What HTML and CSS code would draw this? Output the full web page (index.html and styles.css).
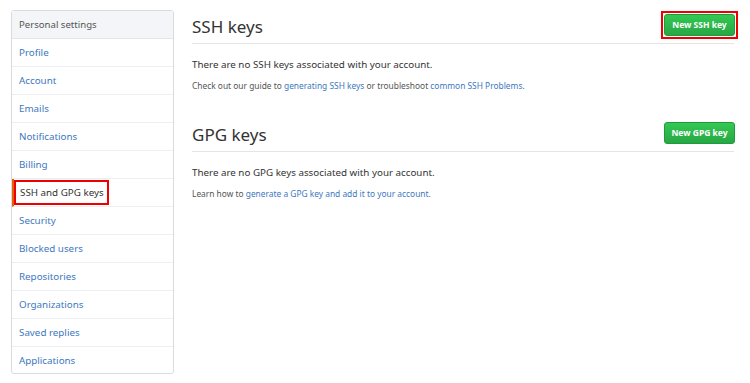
FILE: index.html
```html
<!DOCTYPE html>
<html>
<head>
<meta charset="utf-8">
<link rel="stylesheet" href="styles.css">
</head>
<body>
<div class="page">
  <nav class="menu">
    <div class="menu-head">Personal settings</div>
    <a class="menu-item">Profile</a>
    <a class="menu-item">Account</a>
    <a class="menu-item">Emails</a>
    <a class="menu-item">Notifications</a>
    <a class="menu-item">Billing</a>
    <a class="menu-item selected"><span class="mark">SSH and GPG keys</span></a>
    <a class="menu-item">Security</a>
    <a class="menu-item">Blocked users</a>
    <a class="menu-item">Repositories</a>
    <a class="menu-item">Organizations</a>
    <a class="menu-item">Saved replies</a>
    <a class="menu-item">Applications</a>
  </nav>
  <main class="content">
    <section class="section">
      <div class="subhead">
        <h2 class="subhead-title">SSH keys</h2>
        <span class="btn-mark"><button class="btn">New SSH key</button></span>
      </div>
      <p class="blank">There are no SSH keys associated with your account.</p>
      <p class="note">Check out our guide to <a class="link">generating SSH keys</a> or troubleshoot <a class="link">common SSH Problems</a>.</p>
    </section>
    <section class="section">
      <div class="subhead">
        <h2 class="subhead-title">GPG keys</h2>
        <span class="btn-plain"><button class="btn">New GPG key</button></span>
      </div>
      <p class="blank">There are no GPG keys associated with your account.</p>
      <p class="note">Learn how to <a class="link">generate a GPG key and add it to your account</a>.</p>
    </section>
  </main>
</div>
</body>
</html>
```

FILE: styles.css
```css
* { box-sizing: border-box; }
body {
  margin: 0;
  background: #fff;
  font-family: "Noto Sans", "Open Sans", sans-serif;
  color: #333;
}
.page {
  display: flex;
  padding: 10px 16px 0 11px;
  gap: 18px;
}
.menu {
  width: 163px;
  flex: none;
  border: 1px solid #d8dbe0;
  border-radius: 3px;
  display: flex;
  flex-direction: column;
}
.menu-head {
  height: 28px;
  line-height: 27px;
  padding-left: 7px;
  font-size: 9.6px;
  color: #555;
  background: #f3f5f8;
  border-bottom: 1px solid #e4e6ea;
}
.menu-item {
  height: 28px;
  line-height: 27px;
  padding-left: 7px;
  font-size: 9.8px;
  color: #4078c0;
  border-bottom: 1px solid #eceef1;
}
.menu-item:last-child { border-bottom: none; height: 26px; }
.menu-item.selected {
  color: #333;
  border-left: 2px solid #e36209;
  padding-left: 0;
  display: flex;
  align-items: center;
}
.mark {
  border: 2px solid #e00;
  height: 25px;
  line-height: 21px;
  padding: 0 3px 0 4px;
}
.content {
  flex: 1;
  display: flex;
  flex-direction: column;
  gap: 27px;
}
.subhead {
  display: flex;
  align-items: center;
  justify-content: space-between;
  border-bottom: 1px solid #e5e5e5;
  height: 34px;
}
.subhead-title {
  margin: 0;
  font-weight: normal;
  font-size: 17px;
  color: #333;
  line-height: 26px;
}
.btn-mark {
  border: 2px solid #e00;
  padding: 1px 1px;
  margin-right: -4px;
  margin-bottom: 4px;
}
.btn-plain {
  padding: 3px 3px;
  margin-right: -4px;
  margin-bottom: 4px;
}
.btn {
  display: block;
  width: 71px;
  height: 22px;
  border: 1px solid #1e9b3b;
  border-radius: 3px;
  background: linear-gradient(#34c853, #28a745);
  color: #fff;
  font-family: inherit;
  font-weight: bold;
  font-size: 8.5px;
  padding: 0;
}
.blank {
  margin: 14px 0 0;
  font-size: 9.8px;
  color: #333;
}
.note {
  margin: 9px 0 0;
  font-size: 8.4px;
  color: #555;
}
.link { color: #4078c0; }
```
